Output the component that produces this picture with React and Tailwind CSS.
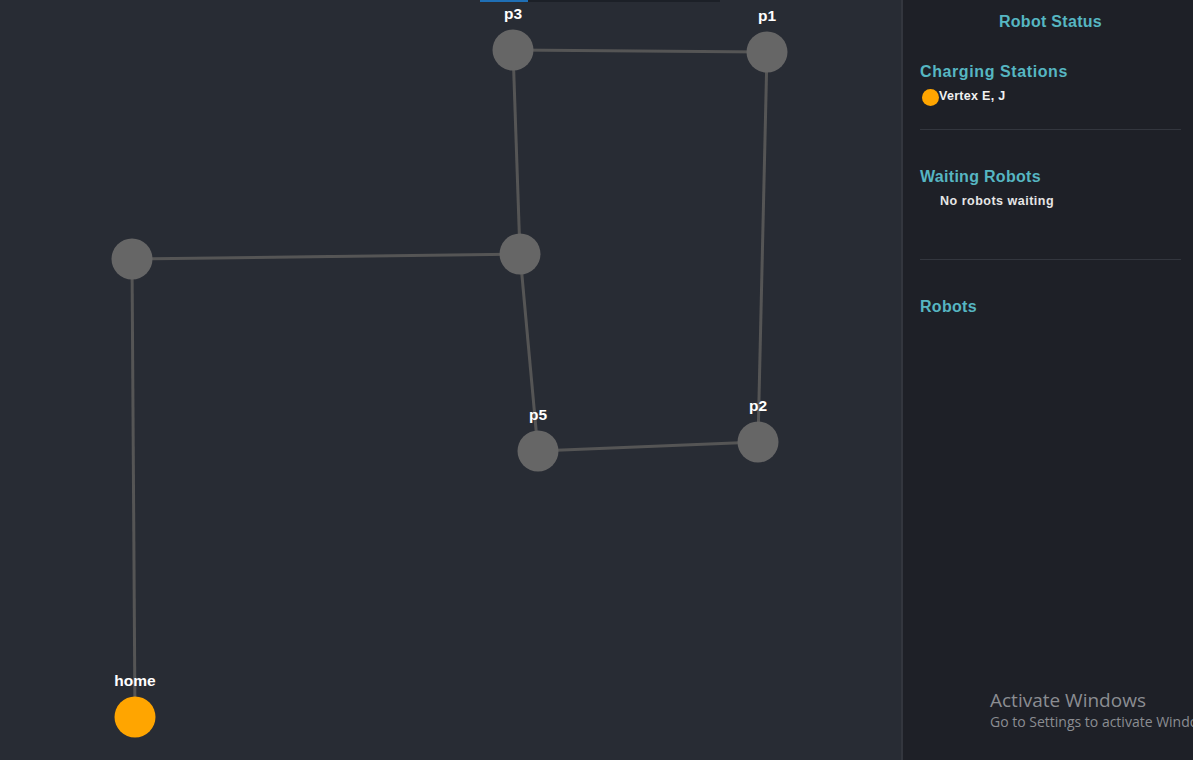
import React from "react";

const nodes = [
  { id: "p3", x: 513, y: 50, label: "p3" },
  { id: "p1", x: 767, y: 52, label: "p1" },
  { id: "a", x: 132, y: 259, label: "" },
  { id: "b", x: 520, y: 254, label: "" },
  { id: "p5", x: 538, y: 451, label: "p5" },
  { id: "p2", x: 758, y: 442, label: "p2" },
  { id: "home", x: 135, y: 717, label: "home", charge: true },
];

const edges = [
  ["p3", "p1"],
  ["p1", "p2"],
  ["p2", "p5"],
  ["p5", "b"],
  ["b", "p3"],
  ["b", "a"],
  ["a", "home"],
];

const byId = Object.fromEntries(nodes.map((n) => [n.id, n]));

export default function App() {
  return (
    <div
      className="flex h-[760px] w-[1193px] overflow-hidden bg-[#282c34]"
      style={{ fontFamily: '"Liberation Sans", Arial, sans-serif' }}
    >
      <div className="relative flex-1">
        <div className="absolute left-[480px] top-0 flex h-[2px] w-[240px] bg-[#1c2027]">
          <div className="h-full w-[48px] bg-[#1f6fb5]" />
        </div>
        <svg width="901" height="760" className="block">
          {edges.map(([s, t]) => (
            <line
              key={s + t}
              x1={byId[s].x}
              y1={byId[s].y}
              x2={byId[t].x}
              y2={byId[t].y}
              stroke="#555555"
              strokeWidth="3"
            />
          ))}
          {nodes.map((n) => (
            <g key={n.id}>
              <circle cx={n.x} cy={n.y} r="20.5" fill={n.charge ? "#ffa500" : "#666666"} />
              {n.label && (
                <text
                  x={n.x}
                  y={n.y - 31}
                  textAnchor="middle"
                  fill="#ffffff"
                  fontSize="15.5"
                  fontWeight="bold"
                  fontFamily='"Liberation Sans", Arial, sans-serif'
                >
                  {n.label}
                </text>
              )}
            </g>
          ))}
        </svg>
      </div>
      <div className="relative flex w-[292px] flex-col border-l-2 border-[#33363e] bg-[#1e2027] pl-[17px] pr-[12px]">
        <h2 className="mt-[12px] text-center text-[16px] font-bold leading-[20px] tracking-[0.3px] text-[#56b6c2]">
          Robot Status
        </h2>
        <h3 className="mt-[30px] text-[16px] font-bold leading-[20px] tracking-[0.6px] text-[#56b6c2]">
          Charging Stations
        </h3>
        <div className="mt-[4px] flex items-center">
          <span className="mt-[3px] ml-[2px] inline-block h-[17px] w-[17px] rounded-full bg-[#ffa500]" />
          <span className="text-[12.5px] font-bold leading-[14px] tracking-[0.3px] text-[#f0f0f0]">Vertex E, J</span>
        </div>
        <div className="mt-[23px] h-px bg-[#33363e]" />
        <h3 className="mt-[37px] text-[16px] font-bold leading-[20px] tracking-[0.3px] text-[#56b6c2]">
          Waiting Robots
        </h3>
        <div className="mt-[7px] pl-[20px] text-[12.5px] font-bold leading-[14px] tracking-[0.5px] text-[#e6e6e6]">
          No robots waiting
        </div>
        <div className="mt-[51px] h-px bg-[#33363e]" />
        <h3 className="mt-[37px] text-[16px] font-bold leading-[20px] tracking-[0.3px] text-[#56b6c2]">
          Robots
        </h3>
        <div
          className="absolute left-[87px] top-[688px] whitespace-nowrap text-[#8b8d92]"
          style={{ fontFamily: '"Open Sans", "Noto Sans", sans-serif' }}
        >
          <div className="text-[19px] leading-[24px]">Activate Windows</div>
          <div className="text-[14px] leading-[20px]">Go to Settings to activate Windows.</div>
        </div>
      </div>
    </div>
  );
}
